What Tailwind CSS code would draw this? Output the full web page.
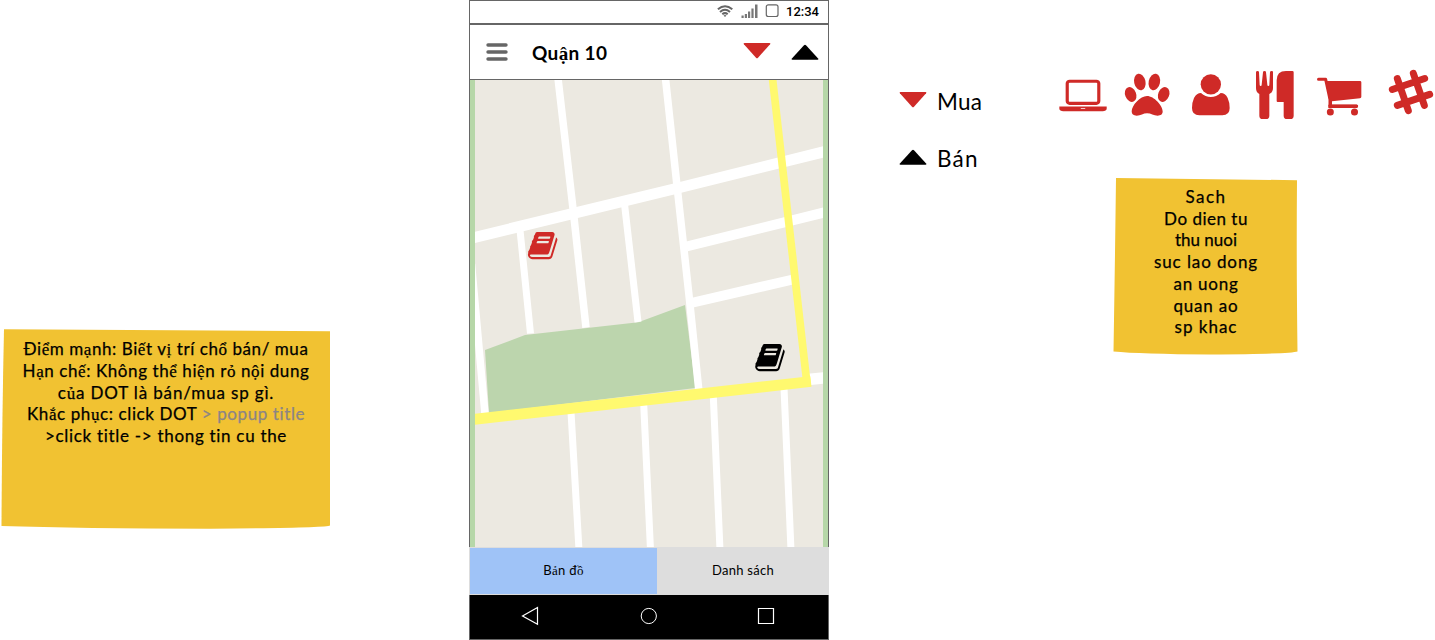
<!DOCTYPE html>
<html lang="vi">
<head>
<meta charset="utf-8">
<title>Quận 10</title>
<script src="https://cdn.jsdelivr.net/npm/@tailwindcss/browser@4"></script>
</head>
<body class="bg-white">
<div class="flex h-[640px] w-[1435px] overflow-hidden font-['Lato','Liberation_Sans',sans-serif] text-black [&_i]:font-['Liberation_Serif',serif] [&_i]:leading-none [&_i]:not-italic">

  <aside class="w-[469px] shrink-0 pt-[328px]">
    <div class="grid h-[201px] w-[332px]">
      <svg class="col-start-1 row-start-1" width="332" height="201" viewBox="0 328 332 201"><path d="M4 329.200L330 331.300V525.500Q326 528 210 528.700Q80 528.500 1.500 526Q2 420 4 329.200Z" fill="#f1c232"/></svg>
      <div class="col-start-1 row-start-1 flex flex-col items-center pt-[10px] text-[17px] leading-[21.75px] whitespace-nowrap [-webkit-text-stroke:0.25px] [&>div]:h-[21.75px]">
        <div class="tracking-[0.57px]">Đi<i>ể</i>m m<i>ạ</i>nh: Bi<i>ế</i>t v<i>ị</i> trí ch<i>ổ</i> bán/ mua</div>
        <div class="tracking-[0.58px]">H<i>ạ</i>n ch<i>ế</i>: Không th<i>ể</i> hi<i>ệ</i>n r<i>ỏ</i> n<i>ộ</i>i dung</div>
        <div class="tracking-[0.85px]">c<i>ủ</i>a DOT là bán/mua sp gì.</div>
        <div class="tracking-[0.6px]">Kh<i>ắ</i>c ph<i>ụ</i>c: click DOT <span class="text-[#8c8585]">&gt; popup title</span></div>
        <div class="tracking-[0.7px]">&gt;click title -&gt; thong tin cu the</div>
      </div>
    </div>
  </aside>

  <main class="flex w-[360px] shrink-0 flex-col">
    <div class="flex h-[25px] items-center border border-b-2 border-[#666] pl-[247px]">
      <svg width="100" height="22" viewBox="717 1 100 22" class="w-[69px] shrink-0" preserveAspectRatio="xMinYMin slice">
        <g fill="none" stroke="#666" stroke-width="2"><path d="M717.900 9.300Q725 3.200 732.300 9.300"/><path d="M720 12Q725 7.600 730 12"/><path d="M722.300 14.300Q725 12 727.700 14.300"/></g>
        <path d="M723.500 15.400Q725 14.400 726.500 15.400L725 17Z" fill="#666"/>
        <path d="M741.500 15.500h2.200v2.500h-2.200zM744.800 14h2.200v4h-2.200zM748 11.500h2.200V18H748zM751.400 8.500h2.200V18h-2.200zM755 4.500h2.500V18H755z" fill="#777"/>
        <rect x="766.300" y="4.800" width="11.700" height="11.700" rx="2" fill="none" stroke="#666" stroke-width="1.200"/>
      </svg>
      <span class="font-['Roboto',sans-serif] text-[13px] leading-4 font-medium">12:34</span>
    </div>
    <header class="flex h-[55px] items-center border border-t-0 border-[#666]">
      <svg class="ml-4 shrink-0" width="22" height="18" viewBox="0 0 22 18"><path d="M2 2h18M2 9h18M2 16h18" stroke="#666" stroke-width="3.400" stroke-linecap="round"/></svg>
      <h1 class="ml-[24px] w-[211px] pt-0.5 text-[19px] font-bold tracking-[0.35px] whitespace-nowrap">Qu<i>ậ</i>n 10</h1>
      <svg class="mt-[-3px] shrink-0" width="28" height="17" viewBox="0 0 28 17"><path d="M1.500 1h25q1.500 0 .6 1.200L15 15.700q-1 1-2 0L.9 2.200Q0 1 1.500 1Z" fill="#cf2a27"/></svg>
      <svg class="ml-5 mt-[-1px] shrink-0" width="28" height="17" viewBox="0 0 28 17"><path d="M1.500 16.700h25q1.500 0 .6-1.200L15 2.300q-1-1-2 0L.9 15.500Q0 16.700 1.500 16.700Z"/></svg>
    </header>

    <svg class="shrink-0" width="360" height="467" viewBox="469 80 360 467">
      <path fill="#b6d7a8" d="M469 80h360v467H469z"/>
      <path fill="#ece9e1" d="M475 80h348v467H475z"/>
      <clipPath id="land"><path d="M475 80h348v467H475z"/></clipPath>
      <g clip-path="url(#land)">
        <path fill="#bcd5ad" d="M485 350L525 335L638.300 322.300L685 305L695.500 388L489 413Z"/>
        <g fill="none" stroke="#fff">
          <path stroke-width="7.500" d="M557.500 74L573.500 213L586 327.500M665 74L676.700 183L689.500 300L698.800 390M471.500 264L485 414"/>
          <path stroke-width="7" d="M520 230L530.500 333.500M624.500 204L638 322M571 412L579 550M643.700 404L650.500 550M713.300 396L720 550M784 388L791 550"/>
          <path stroke-width="11" d="M470 238.500L678 188L828 150.800"/>
          <path stroke-width="10" d="M686.500 246.500L828 211.500M691 303L793 279.500"/>
          <path stroke-width="11.500" d="M808 379.500L828 377.500"/>
        </g>
        <path fill="none" stroke="#fff96f" stroke-width="7.700" d="M772 74L807 384"/>
        <path fill="none" stroke="#fff96f" stroke-width="10.800" d="M470 419.800L810.900 381.500"/>
      </g>
      <path d="M469.500 80V547M828.500 80V547" stroke="#666"/>
      <defs>
        <path id="book" d="M1703 478q40 57 18 129l-275 906q-19 64-76.500 107.500t-122.500 43.500h-923q-77 0-148.500-53.500t-99.500-131.500q-24-67-2-127 0-4 3-27t4-37q1-8-3-21.500t-3-19.500q2-11 8-21t16.500-23.500 16.500-23.500q23-38 45-91.500t30-91.500q3-10 .5-30t-.5-28q3-11 17-28t17-23q21-36 42-92t25-90q1-9-2.500-32t.5-28q4-13 22-30.500t22-22.500q19-26 42.500-84.500t27.500-96.500q1-8-3-25.500t-2-26.500q2-8 9-18t18-23 17-21q8-12 16.500-30.500t15-35 16-36 19.500-32 26.500-23.500 36-11.500 47.500 5.500l-1 3q38-9 51-9h761q74 0 114 56t18 130l-274 906q-36 119-71.500 153.500t-128.500 34.500h-869q-27 0-38 15-11 16-1 43 24 70 144 70h923q29 0 56-15.500t35-41.500l300-987q7-22 5-57 38 15 59 43zm-1064 2q-4 13 2 22.500t20 9.500h608q13 0 25.500-9.500t16.500-22.500l21-64q4-13-2-22.500t-20-9.500h-608q-13 0-25.500 9.500t-16.500 22.500zm-83 256q-4 13 2 22.500t20 9.500h608q13 0 25.500-9.500t16.500-22.500l21-64q4-13-2-22.500t-20-9.500h-608q-13 0-25.500 9.500t-16.500 22.500z"/>
      </defs>
      <use href="#book" transform="translate(526.800 229.700) scale(.0177)" fill="#cf2a27"/>
      <use href="#book" transform="translate(754.100 341.700) scale(.0177)"/>
    </svg>

    <nav class="flex h-12 shrink-0 bg-[#ddd] text-[13px]">
      <div class="mt-px mb-px ml-px flex w-[187px] items-center justify-center bg-[#9fc3f7]"><span class="tracking-[0.35px]">B<i>ả</i>n đ<i>ồ</i></span></div>
      <div class="flex flex-1 items-center justify-center"><span class="tracking-[0.25px]">Danh sách</span></div>
    </nav>
    <svg class="shrink-0" width="360" height="45" viewBox="469 595 360 45">
      <path d="M469 595h360v45H469z" fill="#666"/><path d="M470 595h358v44H470z"/>
      <g fill="none" stroke="#fff" stroke-width="1.200"><path d="M537.500 607.500V624.300L522.500 615.900Z"/><circle cx="648.800" cy="616" r="7.600" stroke-width="1"/><path d="M758.500 608.500h15v15h-15z"/></g>
    </svg>
  </main>

  <section class="flex w-[606px] shrink-0">
    <div class="flex w-[221px] flex-col gap-[27px] pt-[87px] pl-[70px] text-[22.5px] leading-[30px]">
      <div class="flex items-center">
        <svg class="mt-[-5px] mr-[10px]" width="28" height="17" viewBox="0 0 28 17"><path d="M1.500 1h25q1.500 0 .6 1.200L15 15.700q-1 1-2 0L.9 2.200Q0 1 1.500 1Z" fill="#cf2a27"/></svg>
        <span class="tracking-[0.3px]">Mua</span>
      </div>
      <div class="flex items-center">
        <svg class="mt-[-5px] mr-[10px]" width="28" height="17" viewBox="0 0 28 17"><path d="M1.500 16.700h25q1.500 0 .6-1.200L15 2.300q-1-1-2 0L.9 15.500Q0 16.700 1.500 16.700Z"/></svg>
        <span class="tracking-[1.2px]">Bán</span>
      </div>
    </div>

    <div class="flex w-[385px] flex-col pt-[60px]">
      <div class="flex h-[70px] fill-[#cf2a27] stroke-[#cf2a27]">
        <svg width="65" height="70" viewBox="0 0 195 210"><path stroke="none" transform="translate(28 40) scale(.074)" d="M416 1280q-66 0-113-47t-47-113v-704q0-66 47-113t113-47h1088q66 0 113 47t47 113v704q0 66-47 113t-113 47h-1088zm-32-864v704q0 13 9.500 22.500t22.500 9.500h1088q13 0 22.500-9.500t9.500-22.500v-704q0-13-9.500-22.500t-22.500-9.500h-1088q-13 0-22.500 9.500t-9.500 22.500zm1376 928h160v96q0 40-47 68t-113 28h-1600q-66 0-113-28t-47-68v-96h1760zm-720 96q16 0 16-16t-16-16h-160q-16 0-16 16t16 16h160z"/></svg>
        <svg width="65" height="70" viewBox="195 0 195 210"><g stroke="none">
          <ellipse cx="242" cy="103.500" rx="16.500" ry="23" transform="rotate(-22 242 103.500)"/><ellipse cx="269.500" cy="66" rx="17" ry="25" transform="rotate(-12 269.500 66)"/><ellipse cx="313" cy="66" rx="17" ry="25" transform="rotate(12 313 66)"/><ellipse cx="341" cy="103.500" rx="16.500" ry="23" transform="rotate(22 341 103.500)"/>
          <path d="M291 108C312 108 338 137 338 154C338 164 332 167 323 167C311 167 303 160 291 160C280 160 272 167 260 167C250 167 245 163 245 154C245 136 271 108 291 108Z"/></g></svg>
        <svg width="65" height="70" viewBox="390 0 195 210"><g stroke="none"><circle cx="482.500" cy="73" r="30.500"/><path d="M453 99Q466 111 482.500 111T512 99Q526 99 533 114Q539 127 539 144Q539 166 517 166H448Q426 166 426 144Q426 127 432 114Q440 99 453 99Z"/></g></svg>
        <svg width="60" height="70" viewBox="15 0 180 210"><g stroke="none"><path d="M48 37Q48 33 52.500 33T57 37L59 74Q59 78 62 78T65 74L69 37Q69 33 73.500 33T78 37L82 74Q82 78 85 78T88 74L90 37Q90 33 95 33T99 37V84Q99 97 88 102V167Q88 177 78 177H68Q58 177 58 167V102Q48 97 48 84Z"/><path d="M110 61Q110 33 138 33H157Q161 33 161 37V167Q161 177 151 177H141Q131 177 131 167V126H113Q110 126 110 123Z"/></g></svg>
        <svg width="70" height="70" viewBox="195 0 210 210"><path fill="none" stroke-width="9" stroke-linecap="round" stroke-linejoin="round" d="M235.500 58H257L270 118V138H350"/><path stroke="none" d="M259 63H360Q364 63 364 67V110Q364 114 360 114.500L276 124V134H269ZM265 134H350Q354 134 354 139T350 144H265Z"/><circle stroke="none" cx="271" cy="156" r="10.500"/><circle stroke="none" cx="343.500" cy="156" r="10.500"/></svg>
        <svg width="60" height="70" viewBox="405 0 180 210"><path fill="none" stroke-width="21" stroke-linecap="round" d="M472 56L505 152M520 40L553 136M457 88.500L554 55.500M472 136L569 103"/></svg>
      </div>
      <div class="mt-[47px] ml-[63px] grid h-[178px] w-[186px]">
        <svg class="col-start-1 row-start-1" width="186" height="178" viewBox="1113 177 186 178"><path d="M1116 178L1297 180.200Q1296.300 260 1297.500 351.500Q1290 354 1210 354.500Q1140 354 1113.500 351.500Q1115 260 1116 178Z" fill="#f1c232"/></svg>
        <div class="col-start-1 row-start-1 flex flex-col items-center pt-[9px] text-[17px] leading-[21.7px] whitespace-nowrap [-webkit-text-stroke:0.25px]">
          <div class="tracking-[1.5px]">Sach</div>
          <div class="tracking-[0.5px]">Do dien tu</div>
          <div>thu nuoi</div>
          <div class="tracking-[0.9px]">suc lao dong</div>
          <div class="tracking-[0.75px]">an uong</div>
          <div class="tracking-[0.8px]">quan ao</div>
          <div class="tracking-[1px]">sp khac</div>
        </div>
      </div>
    </div>
  </section>
</div>
</body>
</html>
